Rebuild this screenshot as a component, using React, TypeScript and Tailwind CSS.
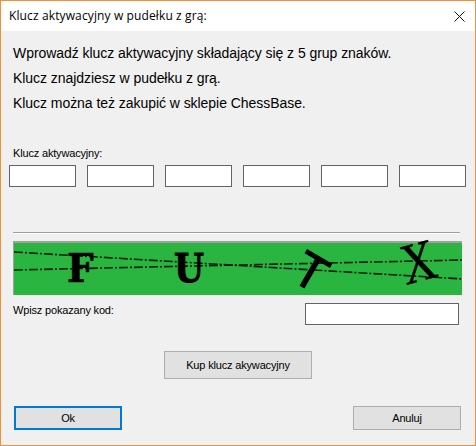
const keyFields = [0, 1, 2, 3, 4, 5]

const smallText = "font-['Liberation_Sans',Arial,sans-serif] text-[11px] leading-[13px] tracking-[-0.17px] text-black"

// ─── Captcha ──────────────────────────────────────────────────────────────────

function Captcha() {
  return (
    <div className="ml-3 mt-[7px] h-[54px] w-[449px] border-t-2 border-l border-t-[#a0a0a0] border-l-[#a0a0a0] bg-[#2ab540]">
      <svg width="448" height="52" viewBox="0 1 448 52" className="block overflow-visible">
        <g stroke="#06200b" strokeWidth="1.6" strokeDasharray="9 2 2 2" fill="none">
          <line x1="0" y1="10" x2="449" y2="37" />
          <line x1="0" y1="28" x2="449" y2="18" />
        </g>
        <g fill="#000" stroke="#000" fontFamily="'DejaVu Serif', serif" fontWeight="700" fontSize="39">
          <text strokeWidth="0.6" transform="translate(53 40) scale(0.96 1)">F</text>
          <text strokeWidth="1" transform="translate(160 40) scale(0.88 1)">U</text>
          <text fontFamily="'Liberation Sans', sans-serif" fontWeight="400" fontSize="50" strokeWidth="1" transform="translate(275 37) rotate(30)">T</text>
          <text fontFamily="'Liberation Serif', serif" fontWeight="400" fontSize="50" strokeWidth="0.4" transform="matrix(0.92 -0.25 0.26 1.12 392 43)">X</text>
        </g>
      </svg>
    </div>
  )
}

// ─── Dialog ───────────────────────────────────────────────────────────────────

export default function App() {
  return (
    <div className="flex h-[446px] w-[476px] flex-col border border-[#f0913a] bg-[#f0f0f0]">
      {/* Title bar */}
      <div className="flex h-[30px] items-center justify-between bg-white pl-2 pr-[10px]">
        <span className="font-['Open_Sans',sans-serif] text-[12px] tracking-[0.12px] text-black">Klucz aktywacyjny w pudełku z grą:</span>
        <svg width="11" height="11" viewBox="0 0 11 11" stroke="#111" strokeWidth="1" fill="none">
          <path d="M0.5 0.5 L10.5 10.5 M10.5 0.5 L0.5 10.5" />
        </svg>
      </div>

      {/* Intro */}
      <div className="ml-3 mt-[13px] flex flex-col gap-[7px] font-['Liberation_Sans',Arial,sans-serif] text-[14px] leading-[18px] tracking-[-0.05px] text-black">
        <p>Wprowadź klucz aktywacyjny składający się z 5 grup znaków.</p>
        <p>Klucz znajdziesz w pudełku z grą.</p>
        <p>Klucz można też zakupić w sklepie ChessBase.</p>
      </div>

      {/* Activation key */}
      <p className={`ml-3 mt-[35px] ${smallText}`}>Klucz aktywacyjny:</p>
      <div className="ml-2 mt-[5px] flex gap-[11px]">
        {keyFields.map((f) => (
          <div key={f} className="h-[22px] w-[67px] border border-[#646464] bg-white" />
        ))}
      </div>

      <div className="ml-3 mt-[45px] h-[2px] w-[447px] border-t border-b border-t-[#a0a0a0] border-b-white" />

      <Captcha />

      {/* Code entry */}
      <div className="ml-3 mt-[8px] flex w-[446px] items-start justify-between">
        <p className={`mt-[1px] ${smallText}`}>Wpisz pokazany kod:</p>
        <div className="h-[22px] w-[154px] border border-[#646464] bg-white" />
      </div>

      <button className={`mx-auto mt-[26px] h-[28px] w-[148px] border border-[#adadad] bg-[#e1e1e1] ${smallText}`}>
        Kup klucz akywacyjny
      </button>

      {/* Footer */}
      <div className="ml-[13px] mt-[27px] flex w-[447px] justify-between">
        <button className={`h-[24px] w-[108px] border-2 border-[#0078d7] bg-[#e1e1e1] ${smallText}`}>Ok</button>
        <button className={`h-[24px] w-[108px] border border-[#adadad] bg-[#e1e1e1] ${smallText}`}>Anuluj</button>
      </div>
    </div>
  )
}
